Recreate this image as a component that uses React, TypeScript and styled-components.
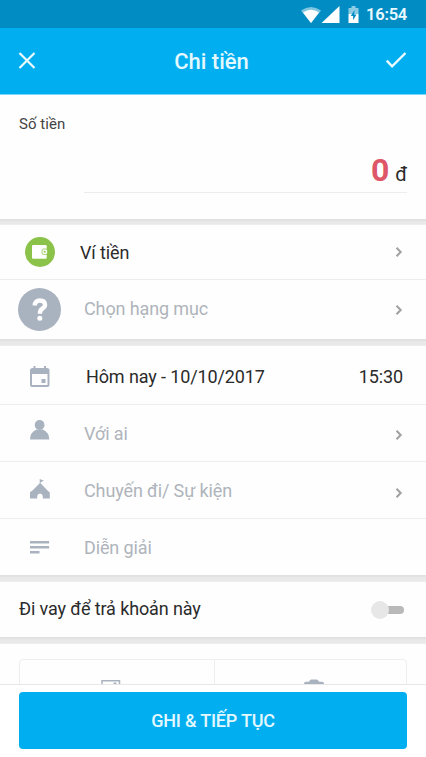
import React from 'react';
import styled, { createGlobalStyle } from 'styled-components';

const GlobalStyle = createGlobalStyle`
  * { box-sizing: border-box; }
  html, body { margin: 0; padding: 0; overflow: hidden; }
  body { font-family: Roboto, "Noto Sans", sans-serif; background: #fff; }
  svg { display: block; }
`;

const Screen = styled.div`
  width: 426px;
  height: 757px;
  display: flex;
  flex-direction: column;
  overflow: hidden;
  background: #fefefe;
`;

const Text = styled.span<{ $size?: number; $track?: number; $color?: string; $weight?: number; $line?: number; $drop?: number }>`
  display: block;
  white-space: nowrap;
  margin-top: ${(p) => p.$drop ?? 0}px;
  font-size: ${(p) => p.$size ?? 18}px;
  line-height: ${(p) => p.$line ?? 24}px;
  font-weight: ${(p) => p.$weight ?? 400};
  letter-spacing: ${(p) => p.$track ?? -0.12}px;
  color: ${(p) => p.$color ?? '#2b2b2b'};
`;

const StatusBar = styled.div`
  flex: none;
  height: 28px;
  padding: 1px 19px 0 0;
  display: flex;
  align-items: center;
  justify-content: flex-end;
  background: #018dc3;
`;

const StatusIcons = styled.div`
  display: flex;
  margin-right: 6px;
`;

const Header = styled.header`
  flex: none;
  height: 67px;
  padding: 0 18px 0 15px;
  display: grid;
  grid-template-columns: 24px 1fr 24px;
  align-items: center;
  justify-items: center;
  background: #01aff1;
  border-bottom: 1px solid #7fd5f8;
`;

const AmountPanel = styled.section`
  flex: none;
  height: 124px;
  padding: 19px 19px 0;
`;

const AmountField = styled.div`
  height: 59px;
  margin-left: 65px;
  display: flex;
  align-items: baseline;
  justify-content: flex-end;
  gap: 6px;
  padding-top: 19px;
  border-bottom: 1px solid #ededed;
`;

const Gap = styled.div<{ $height?: number }>`
  flex: none;
  height: ${(p) => p.$height ?? 7}px;
  background: linear-gradient(#dedede, #e9e9e9 3px, #e9e9e9 calc(100% - 1px), #f2f2f2);
`;

const Row = styled.div<{ $height: number; $line?: boolean; $start?: number }>`
  flex: none;
  height: ${(p) => p.$height}px;
  padding: 0 18px 0 ${(p) => p.$start ?? 18}px;
  display: flex;
  align-items: center;
  border-bottom: ${(p) => (p.$line ? '1px solid #ededed' : 'none')};
`;

const IconCell = styled.div<{ $gap?: number; $drop?: number }>`
  width: 43px;
  flex: none;
  display: flex;
  justify-content: center;
  margin: ${(p) => p.$drop ?? 0}px ${(p) => p.$gap ?? 23}px 0 0;
`;

const Trailing = styled.div<{ $inset?: number; $drop?: number }>`
  margin-left: auto;
  margin-top: ${(p) => p.$drop ?? 0}px;
  margin-right: ${(p) => p.$inset ?? 5}px;
`;

const Badge = styled.div<{ $size: number; $color: string }>`
  width: ${(p) => p.$size}px;
  height: ${(p) => p.$size}px;
  border-radius: 50%;
  display: flex;
  align-items: center;
  justify-content: center;
  background: ${(p) => p.$color};
`;

const Track = styled.div`
  width: 24px;
  height: 8px;
  border-radius: 4px;
  background: #b9b9b9;
  display: flex;
  align-items: center;
`;

const Knob = styled.div`
  flex: none;
  width: 18px;
  height: 18px;
  border-radius: 50%;
  margin-left: -9px;
  background: #e7e7e7;
`;

const Attachments = styled.section`
  flex: 1;
  min-height: 0;
  padding: 15px 19px 0;
  overflow: hidden;
`;

const AttachmentBox = styled.div`
  height: 60px;
  display: grid;
  grid-template-columns: 195px 1fr;
  border: 1px solid #eee;
  border-radius: 4px;
`;

const AttachmentCell = styled.div<{ $line?: boolean; $start?: number; $end?: number }>`
  display: flex;
  justify-content: center;
  padding: 19px ${(p) => p.$end ?? 0}px 0 ${(p) => p.$start ?? 0}px;
  border-right: ${(p) => (p.$line ? '1px solid #eee' : 'none')};
`;

const Footer = styled.footer`
  flex: none;
  height: 73px;
  padding: 7px 19px 9px;
  border-top: 1px solid #e8e8e8;
  background: #fff;
`;

const SaveButton = styled.button`
  width: 100%;
  height: 57px;
  padding: 0;
  border: 0;
  border-radius: 4px;
  background: #01aff1;
  font-family: inherit;
`;

const GREY = '#a9b2bf';
const MUTED = '#afb4bb';

const Chevron = () => (
  <svg width="8" height="12" viewBox="0 0 8 12" fill="none" stroke="#a0a0a0" strokeWidth="2">
    <path d="M1.5 1.8 5.7 6 1.5 10.2" />
  </svg>
);

const StatusGlyphs = () => (
  <svg width="60" height="18" viewBox="0 0 60 18">
    <path d="M1 4.5Q11 -2.5 21 4.5L11 17Z" fill="#fff" opacity=".5" />
    <path d="M3 6.5Q11 .8 19 6.500L11 17Z" fill="#fff" />
    <path d="M21.5 17H39.5V0Z" fill="#fff" />
    <path d="M48.500 2h3V0h4v2h3v6h-10Z" fill="#fff" opacity=".55" />
    <path d="M48.500 8h10v9h-10Z" fill="#fff" />
    <path d="M54.500 4 50.800 10h2.300v4.200L56.500 8.400h-2.300Z" fill="#018dc3" />
  </svg>
);

const Close = () => (
  <svg width="18" height="18" viewBox="0 0 18 18" stroke="#eafaff" strokeWidth="2.200">
    <path d="m1.500 1 15 15M16.500 1 1.500 16" />
  </svg>
);

const Check = () => (
  <svg width="22" height="18" viewBox="0 0 22 18" fill="none" stroke="#eafaff" strokeWidth="2.400">
    <path d="m1.700 8.700 5.400 5.600L20.500 1" />
  </svg>
);

const Wallet = () => (
  <svg width="16" height="14" viewBox="0 0 16 14">
    <rect width="14.700" height="13.700" rx="1.200" fill="#fff" />
    <rect x="10" y="4" width="5.500" height="5.500" rx="1.800" fill="#fff" stroke="#8bc34a" strokeWidth=".8" />
    <circle cx="12.600" cy="6.800" r="1" fill="#8bc34a" />
  </svg>
);

const Calendar = () => (
  <svg width="20" height="22" viewBox="0 0 20 22">
    <path fillRule="evenodd" d="M3.500 0H5.500v2h8.500V0H16v2h1Q19.500 2 19.500 4.500V19q0 2-2 2H2q-2 0-2-2V4.500Q0 2 2.500 2h1ZM2 8v11h15.500V8Z" fill={GREY} />
    <rect x="11.500" y="13" width="4" height="4" fill={GREY} />
  </svg>
);

const Person = () => (
  <svg width="20" height="20" viewBox="0 0 20 20" fill={GREY}>
    <circle cx="9.600" cy="5" r="4.900" />
    <path d="M0 19.500Q0 12.500 6.500 9.500H12.800Q19.300 12.500 19.300 19.500Z" />
  </svg>
);

const Tent = () => (
  <svg width="20" height="20" viewBox="0 0 20 20" fill={GREY}>
    <path d="M9.700 0 14 1.700 10.600 3.200V4.300L17.500 11.500 19.800 13.500V19.500H12.800V17Q12.500 14.500 10 14.500T7.200 17V19.500H-.2V13.500L2.500 11.500 9.700 4.300Z" />
  </svg>
);

const Notes = () => (
  <svg width="20" height="13" viewBox="0 0 20 13" fill={GREY}>
    <path d="M-.2 0h19.300v2.400H-.2ZM-.2 5h19.300v2.400H-.2ZM-.2 10h9.700v2.400H-.2Z" />
  </svg>
);

const Photo = () => (
  <svg width="20" height="16" viewBox="0 0 20 16" fill="none" stroke={GREY} strokeWidth="1.500">
    <path d="M1 1.700H18.500V15H1Z" />
    <circle cx="14" cy="5" r="1.700" fill={GREY} stroke="none" />
  </svg>
);

const Camera = () => (
  <svg width="20" height="18" viewBox="0 0 20 18" fill={GREY}>
    <path d="M0 4.500Q0 2.800 2 2.800H5Q6 .5 7.500.5h5Q14 .5 15 2.800h3q2 0 2 1.700V18H0Z" />
  </svg>
);

const QuestionMark = () => (
  <svg width="16" height="23" viewBox="0 0 16 23" fill="none" stroke="#fff" strokeWidth="4.400">
    <path d="M2.800 7.500Q2.800 2.500 7.800 2.500T13 6.800Q13 9 10.300 10.700 7.900 12.300 7.900 15.800" />
    <circle cx="7.800" cy="20.200" r="2.500" fill="#fff" stroke="none" />
  </svg>
);

export default function App() {
  return (
    <>
      <GlobalStyle />
      <Screen>
        <StatusBar>
          <StatusIcons><StatusGlyphs /></StatusIcons>
          <Text $size={16.5} $weight={600} $color="#e9f9ff" $line={20} $track={-0.25} $drop={1}>16:54</Text>
        </StatusBar>
        <Header>
          <Close />
          <Text $size={22} $weight={500} $color="#e3f8ff" $line={28} $drop={2} $track={0}>Chi tiền</Text>
          <Check />
        </Header>
        <AmountPanel>
          <Text $size={15} $line={20} $color="#444" $track={0.05}>Số tiền</Text>
          <AmountField>
            <Text $size={32} $weight={700} $color="#dd5768" $line={34}>0</Text>
            <Text $size={20}>đ</Text>
          </AmountField>
        </AmountPanel>
        <Gap $height={6} />
        <Row $height={55} $line>
          <IconCell $gap={19}><Badge $size={30} $color="#8bc34a"><Wallet /></Badge></IconCell>
          <Text $drop={2}>Ví tiền</Text>
          <Trailing><Chevron /></Trailing>
        </Row>
        <Row $height={59}>
          <IconCell><Badge $size={43} $color={GREY}><QuestionMark /></Badge></IconCell>
          <Text $color={MUTED} $drop={-1}>Chọn hạng mục</Text>
          <Trailing><Chevron /></Trailing>
        </Row>
        <Gap />
        <Row $height={59} $line>
          <IconCell $gap={25} $drop={4}><Calendar /></IconCell>
          <Text $drop={4}>Hôm nay - 10/10/2017</Text>
          <Trailing $drop={4}><Text>15:30</Text></Trailing>
        </Row>
        <Row $height={57} $line>
          <IconCell $drop={-7}><Person /></IconCell>
          <Text $color={MUTED} $drop={1}>Với ai</Text>
          <Trailing $drop={3}><Chevron /></Trailing>
        </Row>
        <Row $height={57} $line>
          <IconCell $drop={-2}><Tent /></IconCell>
          <Text $color={MUTED} $drop={1}>Chuyến đi/ Sự kiện</Text>
          <Trailing $drop={5}><Chevron /></Trailing>
        </Row>
        <Row $height={56}>
          <IconCell><Notes /></IconCell>
          <Text $color={MUTED} $drop={1}>Diễn giải</Text>
        </Row>
        <Gap />
        <Row $height={55} $start={19}>
          <Text $drop={-1}>Đi vay để trả khoản này</Text>
          <Trailing $inset={4}><Track><Knob /></Track></Trailing>
        </Row>
        <Gap />
        <Attachments>
          <AttachmentBox>
            <AttachmentCell $line $end={13}><Photo /></AttachmentCell>
            <AttachmentCell $start={6}><Camera /></AttachmentCell>
          </AttachmentBox>
        </Attachments>
        <Footer>
          <SaveButton type="button"><Text $weight={500} $color="#e3f8ff" $track={-0.2}>GHI &amp; TIẾP TỤC</Text></SaveButton>
        </Footer>
      </Screen>
    </>
  );
}
